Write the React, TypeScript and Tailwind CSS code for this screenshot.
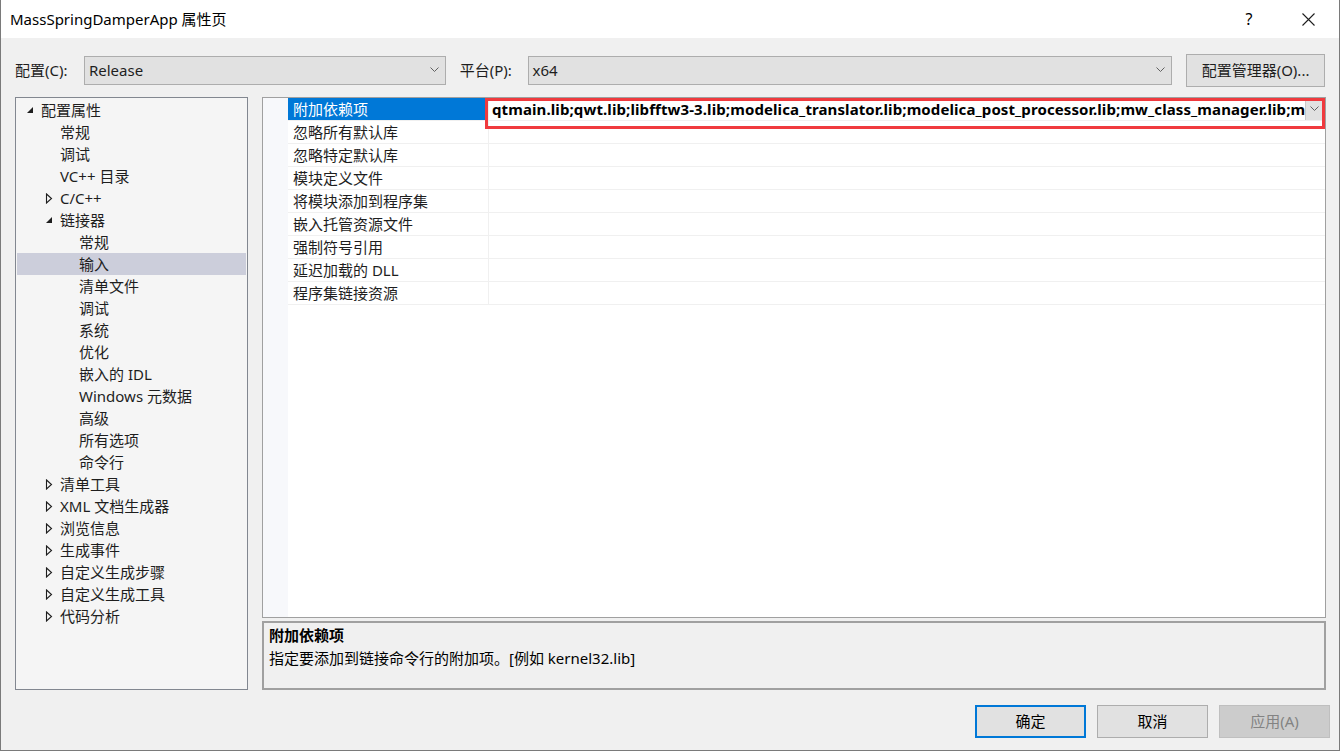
import React from "react";

const FONT = { fontFamily: '"Noto Sans", "Noto Sans CJK SC", sans-serif' };

function Chevron() {
  return (
    <svg width="9" height="6" viewBox="0 0 9 6" className="shrink-0">
      <path d="M0.5 0.5 L4.5 4.5 L8.5 0.5" fill="none" stroke="#606060" strokeWidth="1" />
    </svg>
  );
}

function Expanded() {
  return (
    <svg width="8" height="8" viewBox="0 0 8 8">
      <path d="M7 1 L7 7 L1 7 Z" fill="#1e1e1e" />
    </svg>
  );
}

function Collapsed() {
  return (
    <svg width="8" height="11" viewBox="0 0 8 11">
      <path d="M1.5 1 L6.5 5.5 L1.5 10 Z" fill="none" stroke="#1e1e1e" strokeWidth="1.1" />
    </svg>
  );
}

type Node = { label: string; level: number; state?: "open" | "closed"; selected?: boolean };

const tree: Node[] = [
  { label: "配置属性", level: 0, state: "open" },
  { label: "常规", level: 1 },
  { label: "调试", level: 1 },
  { label: "VC++ 目录", level: 1 },
  { label: "C/C++", level: 1, state: "closed" },
  { label: "链接器", level: 1, state: "open" },
  { label: "常规", level: 2 },
  { label: "输入", level: 2, selected: true },
  { label: "清单文件", level: 2 },
  { label: "调试", level: 2 },
  { label: "系统", level: 2 },
  { label: "优化", level: 2 },
  { label: "嵌入的 IDL", level: 2 },
  { label: "Windows 元数据", level: 2 },
  { label: "高级", level: 2 },
  { label: "所有选项", level: 2 },
  { label: "命令行", level: 2 },
  { label: "清单工具", level: 1, state: "closed" },
  { label: "XML 文档生成器", level: 1, state: "closed" },
  { label: "浏览信息", level: 1, state: "closed" },
  { label: "生成事件", level: 1, state: "closed" },
  { label: "自定义生成步骤", level: 1, state: "closed" },
  { label: "自定义生成工具", level: 1, state: "closed" },
  { label: "代码分析", level: 1, state: "closed" },
];

const padClass = ["pl-[24px]", "pl-[43px]", "pl-[62px]"];

const props = [
  "附加依赖项",
  "忽略所有默认库",
  "忽略特定默认库",
  "模块定义文件",
  "将模块添加到程序集",
  "嵌入托管资源文件",
  "强制符号引用",
  "延迟加载的 DLL",
  "程序集链接资源",
];

const VALUE =
  "qtmain.lib;qwt.lib;libfftw3-3.lib;modelica_translator.lib;modelica_post_processor.lib;mw_class_manager.lib;m";

export default function App() {
  return (
    <div
      className="w-[1340px] h-[751px] flex flex-col border-l border-r border-b border-[#7a7a7a] bg-[#f0f0f0] text-[15px] text-[#1e1e1e] overflow-hidden"
      style={FONT}
    >
      {/* Title bar */}
      <div className="h-[38px] bg-white flex items-center shrink-0">
        <div className="pl-[9px] text-[15px] text-black leading-none flex-1">MassSpringDamperApp 属性页</div>
        <div className="w-[56px] text-center text-[16px] text-black mr-[3px]">?</div>
        <div className="w-[56px] flex justify-center mr-[3px]">
          <svg width="13" height="13" viewBox="0 0 13 13">
            <path d="M0.5 0.5 L12.5 12.5 M12.5 0.5 L0.5 12.5" stroke="#1e1e1e" strokeWidth="1.1" />
          </svg>
        </div>
      </div>

      {/* Config row */}
      <div className="flex items-center pl-[14px] pr-[14px] mt-[16px] h-[32px] shrink-0">
        <div className="w-[69px]">配置(C):</div>
        <div className="w-[362px] h-[29px] bg-[#e1e1e1] border border-[#adadad] flex items-center pl-[4px] pr-[6px]">
          <span className="flex-1">Release</span>
          <Chevron />
        </div>
        <div className="ml-[14px] w-[68px]">平台(P):</div>
        <div className="w-[645px] h-[29px] bg-[#e1e1e1] border border-[#adadad] flex items-center pl-[4px] pr-[6px]">
          <span className="flex-1">x64</span>
          <Chevron />
        </div>
        <div className="ml-[14px] w-[139px] h-[33px] bg-[#e1e1e1] border border-[#adadad] flex items-center justify-center">
          配置管理器(O)...
        </div>
      </div>

      {/* Main */}
      <div className="flex mt-[11px] pl-[14px] h-[593px] shrink-0">
        {/* tree */}
        <div className="w-[233px] h-full border border-[#828790] bg-[#f5f5f5] pt-[1px] px-[1px] shrink-0">
          {tree.map((n, i) => (
            <div
              key={i}
              className={`h-[22px] flex items-center relative ${padClass[n.level]} ${n.selected ? "bg-[#cccedb]" : ""}`}
            >
              {n.state && (
                <div className="absolute top-0 h-[22px] flex items-center" style={{ left: 9 + n.level * 19 }}>
                  {n.state === "open" ? <Expanded /> : <Collapsed />}
                </div>
              )}
              <span className="leading-none">{n.label}</span>
            </div>
          ))}
        </div>

        {/* right */}
        <div className="ml-[14px] w-[1064px] flex flex-col shrink-0">
          <div className="h-[522px] border border-[#a0a0a0] bg-white flex relative">
            <div className="w-[25px] shrink-0 bg-[#f7f8fb]" />
            <div className="flex-1 min-w-0 flex flex-col">
              {props.map((p, i) => (
                <div key={i} className="h-[23px] flex border-b border-[#f0f0f0]">
                  <div
                    className={`w-[201px] shrink-0 pl-[5px] flex items-center border-r border-[#f0f0f0] ${
                      i === 0 ? "bg-[#0078d7] text-white" : ""
                    }`}
                  >
                    {p}
                  </div>
                  <div className="flex-1 flex items-center min-w-0">
                    {i === 0 && (
                      <>
                        <div className="flex-1 min-w-0 pl-[3px] font-bold tracking-[0.1px] whitespace-nowrap overflow-hidden text-black">
                          {VALUE}
                        </div>
                        <div className="w-[18px] shrink-0 h-[22px] bg-[#e1e1e1] border-l border-[#c8c8c8] flex items-center justify-center mr-[2px]">
                          <Chevron />
                        </div>
                      </>
                    )}
                  </div>
                </div>
              ))}
            </div>
            <div className="absolute left-[222px] top-[0px] w-[840px] h-[31px] border-[3px] border-[#f03a3e] pointer-events-none" />
          </div>
          <div className="mt-[3px] h-[69px] border-2 border-[#a0a0a0] bg-[#f0f0f0] px-[5px] pt-[1px] flex flex-col">
            <div className="font-bold text-[15px] leading-[23px] text-black">附加依赖项</div>
            <div className="text-[15px] leading-[23px] text-black">指定要添加到链接命令行的附加项。[例如 kernel32.lib]</div>
          </div>
        </div>
      </div>

      {/* Buttons */}
      <div className="flex justify-end pr-[9px] mt-[15px] gap-[11px]">
        <div className="w-[111px] h-[33px] border-2 border-[#0078d7] bg-[#e1e1e1] flex items-center justify-center text-black">
          确定
        </div>
        <div className="w-[111px] h-[33px] border border-[#adadad] bg-[#e1e1e1] flex items-center justify-center text-black">
          取消
        </div>
        <div className="w-[111px] h-[33px] border border-[#bfbfbf] bg-[#cccccc] flex items-center justify-center text-[#838383]">
          应用(A)
        </div>
      </div>
    </div>
  );
}
